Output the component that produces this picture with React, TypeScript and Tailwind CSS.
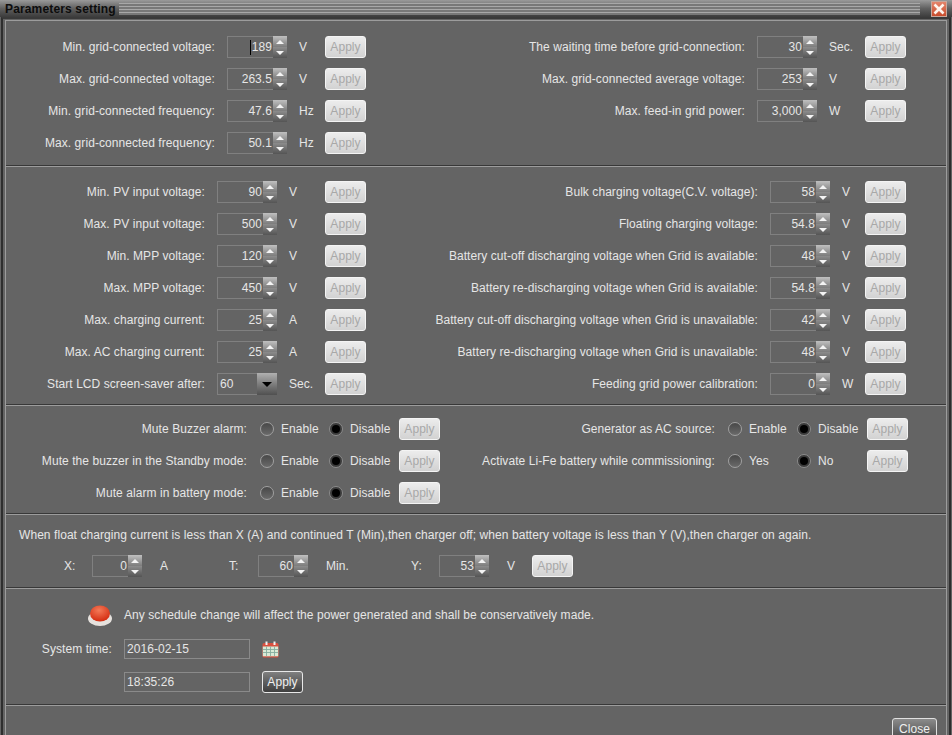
import React from 'react';

const Apply = ({ active = false }: { active?: boolean }) => (
  <button
    className={
      active
        ? 'w-[41px] h-[22px] shrink-0 rounded-[3px] border border-[#e8e8e8] bg-linear-to-b from-[#808080] to-[#3f3f3f] text-[12px] text-[#f0f0f0]'
        : 'w-[41px] h-[22px] shrink-0 rounded-[3px] border border-[#f4f4f4] bg-linear-to-b from-[#ececec] to-[#d2d2d2] text-[12px] text-[#a8a8a8]'
    }
  >
    Apply
  </button>
);

const Arrow = ({ down = false }: { down?: boolean }) => (
  <svg width="8" height="4" viewBox="0 0 8 4" className="block">
    <path d={down ? 'M0 0H8L4 4Z' : 'M0 4H8L4 0Z'} fill="#f4f4f4" />
  </svg>
);

const Spinner = ({ value, caret = false, wide = true }: { value: string; caret?: boolean; wide?: boolean }) => (
  <div className={wide ? 'flex h-[22px] w-[60px] shrink-0 border border-[#808080]' : 'flex h-[22px] w-[50px] shrink-0 border border-[#808080]'}>
    <div className="flex flex-1 items-center justify-end pr-[1px] text-[12px]">
      {caret && <span className="mr-[1px] h-[15px] w-px bg-black" />}
      {value}
    </div>
    <div className="-my-px -mr-px flex w-[14px] flex-col">
      <div className="flex h-[11px] items-center justify-center bg-linear-to-b from-[#c0c0c0] to-[#7c7c7c]"><Arrow /></div>
      <div className="flex h-[11px] items-center justify-center bg-linear-to-b from-[#8c8c8c] to-[#555555]"><Arrow down /></div>
    </div>
  </div>
);

type FieldProps = { label: string; value: string; unit: string; labelW: string; unitW: string; caret?: boolean };

const Field = ({ label, value, unit, labelW, unitW, caret }: FieldProps) => (
  <div className="flex h-[22px] items-center">
    <div className={`${labelW} shrink-0 whitespace-nowrap text-right`}>{label}</div>
    <div className="ml-3"><Spinner value={value} caret={caret} /></div>
    <div className={`${unitW} ml-3 shrink-0`}>{unit}</div>
    <Apply />
  </div>
);

const Radio = ({ on = false }: { on?: boolean }) => (
  <span
    className={
      on
        ? 'flex h-[14px] w-[14px] shrink-0 items-center justify-center rounded-full border border-[#8c8c8c] bg-[#3a3a3a]'
        : 'flex h-[14px] w-[14px] shrink-0 items-center justify-center rounded-full border border-[#a0a0a0] bg-linear-to-b from-[#484848] to-[#6a6a6a]'
    }
  >
    {on && <span className="h-[8px] w-[8px] rounded-full bg-black" />}
  </span>
);

const RadioRow = ({ label, labelW, a, b }: { label: string; labelW: string; a: string; b: string }) => (
  <div className="flex h-[22px] items-center">
    <div className={`${labelW} shrink-0 whitespace-nowrap text-right`}>{label}</div>
    <div className="ml-[13px]"><Radio /></div>
    <div className="ml-[7px] w-[48px] shrink-0">{a}</div>
    <Radio on />
    <div className="ml-[7px] w-[49px] shrink-0">{b}</div>
    <Apply />
  </div>
);

const Section = ({ className, children }: { className: string; children: React.ReactNode }) => (
  <div className={`${className} border-t border-b border-t-[#9c9c9c] border-b-[#383838]`}>{children}</div>
);

const left1 = [
  ['Min. grid-connected voltage:', '189', 'V'],
  ['Max. grid-connected voltage:', '263.5', 'V'],
  ['Min. grid-connected frequency:', '47.6', 'Hz'],
  ['Max. grid-connected frequency:', '50.1', 'Hz'],
];
const right1 = [
  ['The waiting time before grid-connection:', '30', 'Sec.'],
  ['Max. grid-connected average voltage:', '253', 'V'],
  ['Max. feed-in grid power:', '3,000', 'W'],
];
const left2 = [
  ['Min. PV input voltage:', '90', 'V'],
  ['Max. PV input voltage:', '500', 'V'],
  ['Min. MPP voltage:', '120', 'V'],
  ['Max. MPP voltage:', '450', 'V'],
  ['Max. charging current:', '25', 'A'],
  ['Max. AC charging current:', '25', 'A'],
];
const right2 = [
  ['Bulk charging voltage(C.V. voltage):', '58', 'V'],
  ['Floating charging voltage:', '54.8', 'V'],
  ['Battery cut-off discharging voltage when Grid is available:', '48', 'V'],
  ['Battery re-discharging voltage when Grid is available:', '54.8', 'V'],
  ['Battery cut-off discharging voltage when Grid is unavailable:', '42', 'V'],
  ['Battery re-discharging voltage when Grid is unavailable:', '48', 'V'],
  ['Feeding grid power calibration:', '0', 'W'],
];

export default function App() {
  return (
    <div className="h-[735px] w-[952px] overflow-hidden bg-[#646464] font-['Liberation_Sans',Arial,sans-serif] text-[12px] tracking-[0.065px] text-[#e6e6e6]">
      {/* title bar */}
      <div className="flex h-[17px] items-center bg-linear-to-b from-[#9a9a9a] via-[#606060] to-[#3c3c3c]">
        <div className="pl-[5px] pr-[3px] text-[12px] font-bold tracking-[0.15px] text-[#0c0c0c]">Parameters setting</div>
        <div className="h-[12px] flex-1 bg-[repeating-linear-gradient(180deg,#a8a8a8_0px,#a8a8a8_1px,#787878_1px,#787878_3px)]" />
        <div className="ml-[11px] mr-[5px] flex h-[16px] w-[16px] items-center justify-center border border-[#c8a89c] bg-linear-to-b from-[#e4846a] to-[#c84c2c]">
          <svg width="12" height="12" viewBox="0 0 12 12">
            <path d="M1.5 1.5L10.5 10.5M10.5 1.5L1.5 10.5" stroke="#fff4ec" strokeWidth="2.6" />
          </svg>
        </div>
      </div>

      {/* dialog frame */}
      <div className="mx-[1px] h-[718px] border-x-2 border-t-2 border-x-[#2e2e2e] border-t-[#3a3a3a] px-[2px] pt-px">
        <div className="h-full border-x border-x-[#9c9c9c]">
          <Section className="flex h-[146px] pt-[15px]">
            <div className="flex w-[394px] flex-col gap-[10px]">
              {left1.map(([l, v, u], i) => (
                <Field key={l} label={l} value={v} unit={u} labelW="w-[209px]" unitW="w-[26px]" caret={i === 0} />
              ))}
            </div>
            <div className="flex flex-col gap-[10px]">
              {right1.map(([l, v, u]) => (
                <Field key={l} label={l} value={v} unit={u} labelW="w-[345px]" unitW="w-[36px]" />
              ))}
            </div>
          </Section>

          <Section className="flex h-[239px] pt-[14px]">
            <div className="flex w-[394px] flex-col gap-[10px]">
              {left2.map(([l, v, u]) => (
                <Field key={l} label={l} value={v} unit={u} labelW="w-[199px]" unitW="w-[36px]" />
              ))}
              <div className="flex h-[22px] items-center">
                <div className="w-[199px] shrink-0 text-right">Start LCD screen-saver after:</div>
                <div className="ml-3 flex h-[22px] w-[60px] border border-[#808080]">
                  <div className="flex-1 pl-[2px] leading-[20px]">60</div>
                  <div className="-my-px -mr-px flex w-[20px] items-center justify-center bg-linear-to-b from-[#b0b0b0] to-[#505050]">
                    <svg width="10" height="5" viewBox="0 0 10 5"><path d="M0 0H10L5 5Z" fill="#000" /></svg>
                  </div>
                </div>
                <div className="ml-3 w-[36px]">Sec.</div>
                <Apply />
              </div>
            </div>
            <div className="flex flex-col gap-[10px]">
              {right2.map(([l, v, u]) => (
                <Field key={l} label={l} value={v} unit={u} labelW="w-[358px]" unitW="w-[23px]" />
              ))}
            </div>
          </Section>

          <Section className="flex h-[109px] pt-[12px]">
            <div className="flex w-[440px] flex-col gap-[10px]">
              <RadioRow label="Mute Buzzer alarm:" labelW="w-[241px]" a="Enable" b="Disable" />
              <RadioRow label="Mute the buzzer in the Standby mode:" labelW="w-[241px]" a="Enable" b="Disable" />
              <RadioRow label="Mute alarm in battery mode:" labelW="w-[241px]" a="Enable" b="Disable" />
            </div>
            <div className="flex flex-col gap-[10px]">
              <RadioRow label="Generator as AC source:" labelW="w-[269px]" a="Enable" b="Disable" />
              <RadioRow label="Activate Li-Fe battery while commissioning:" labelW="w-[269px]" a="Yes" b="No" />
            </div>
          </Section>

          <Section className="h-[74px] pl-[13px] pt-[12px]">
            <div className="h-[16px] leading-[16px]">
              When float charging current is less than X (A) and continued T (Min),then charger off; when battery voltage is less than Y (V),then charger on again.
            </div>
            <div className="mt-[12px] flex h-[22px] items-center">
              <div className="ml-[45px] w-[28px]">X:</div>
              <Spinner value="0" wide={false} />
              <div className="ml-[18px] w-[69px]">A</div>
              <div className="w-[29px]">T:</div>
              <Spinner value="60" wide={false} />
              <div className="ml-[18px] w-[85px]">Min.</div>
              <div className="w-[28px]">Y:</div>
              <Spinner value="53" wide={false} />
              <div className="ml-[18px] w-[25px]">V</div>
              <Apply />
            </div>
          </Section>

          <Section className="h-[117px] pt-[15px]">
            <div className="flex h-[22px] items-center">
              <svg width="24" height="21" viewBox="0 0 24 21" className="ml-[82px]">
                <defs>
                  <radialGradient id="led" cx="0.45" cy="0.3" r="0.7">
                    <stop offset="0" stopColor="#f47a58" />
                    <stop offset="1" stopColor="#d42c10" />
                  </radialGradient>
                </defs>
                <ellipse cx="12" cy="13.5" rx="12" ry="7.5" fill="#e6e2de" />
                <ellipse cx="12" cy="8.5" rx="10" ry="8" fill="url(#led)" />
              </svg>
              <div className="ml-3">Any schedule change will affect the power generated and shall be conservatively made.</div>
            </div>
            <div className="mt-3 flex h-[22px] items-center">
              <div className="w-[106px] text-right">System time:</div>
              <div className="ml-3 h-[20px] w-[126px] border border-[#8a8a8a] pl-[2px] leading-[18px]">2016-02-15</div>
              <svg width="17" height="17" viewBox="0 0 17 17" className="ml-3">
                <rect x="0.5" y="2" width="16" height="14.5" rx="1.5" fill="#d8503f" />
                <rect x="0.8" y="5.5" width="15.4" height="9.8" fill="#d8ead6" />
                <path d="M0.8 8.5H16.2M0.8 11.5H16.2M4.5 5.5V15.3M8.5 5.5V15.3M12.5 5.5V15.3" stroke="#86ad9e" strokeWidth="0.9" />
                <rect x="3.5" y="0.5" width="2" height="3.5" fill="#f2f2f2" />
                <rect x="11.5" y="0.5" width="2" height="3.5" fill="#f2f2f2" />
              </svg>
            </div>
            <div className="mt-[11px] flex h-[22px] items-center">
              <div className="ml-[118px] h-[20px] w-[126px] border border-[#8a8a8a] pl-[2px] leading-[18px]">18:35:26</div>
              <div className="ml-3"><Apply active /></div>
            </div>
          </Section>

          <div className="flex h-[30px] justify-end border-t border-t-[#9c9c9c] pr-[9px] pt-3">
            <button className="h-[22px] w-[45px] shrink-0 rounded-[3px] border border-[#e0e0e0] bg-linear-to-b from-[#8c8c8c] to-[#4a4a4a] text-[12px] text-[#f0f0f0]">Close</button>
          </div>
        </div>
      </div>
    </div>
  );
}
